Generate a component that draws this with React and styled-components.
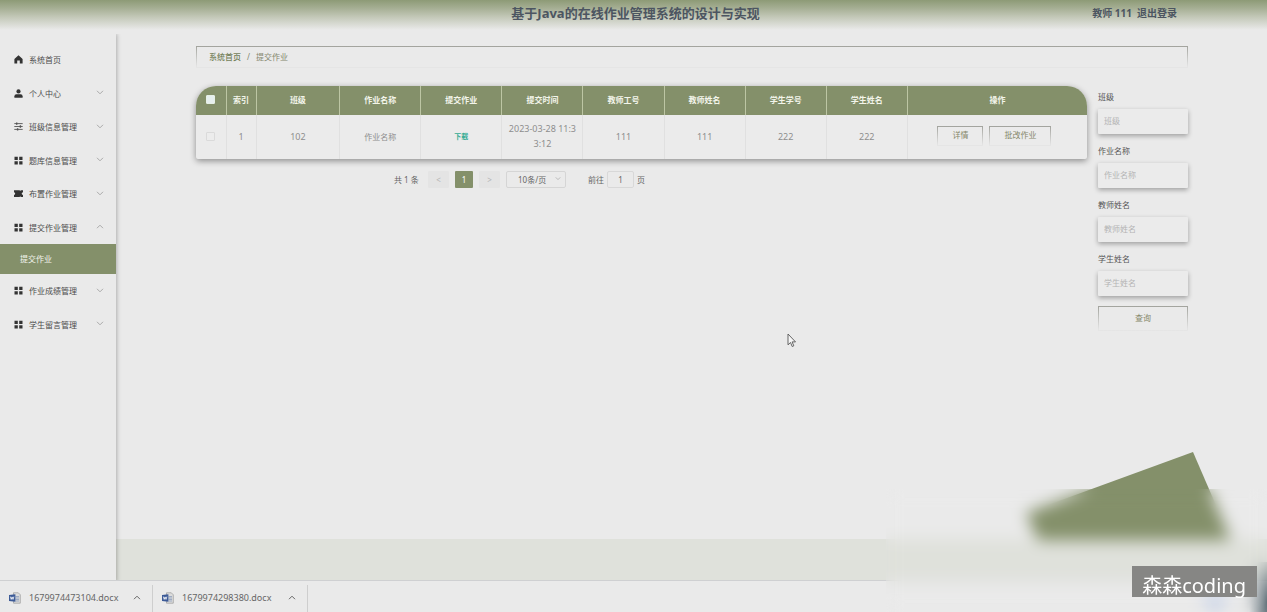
import React from "react";
import styled, { createGlobalStyle } from "styled-components";

const GREEN = "#84906a";
const PAPER = "#eaeaea";

const Global = createGlobalStyle`
  * { box-sizing: border-box; }
  body {
    margin: 0;
    background: ${PAPER};
    color: #555;
    font-family: "Noto Sans", "Noto Sans CJK SC", sans-serif;
    font-size: 8px;
  }
  button, input, select { font: inherit; color: inherit; margin: 0; }
  ul { list-style: none; margin: 0; padding: 0; }
  a { color: inherit; text-decoration: none; }
`;

const Page = styled.div`
  position: relative;
  display: flex;
  flex-direction: column;
  min-height: 100vh;
  overflow: hidden;
`;

const Header = styled.header`
  display: grid;
  grid-template-columns: 1fr auto 1fr;
  align-items: center;
  height: 32px;
  padding: 0 90px 6px;
  background: linear-gradient(#8d9a76 0, #a5ae93 8px, #c3c8b8 17px, ${PAPER} 30px);
  color: #4c5561;
`;

const Title = styled.h1`
  grid-column: 2;
  margin: 0;
  padding-left: 4px;
  font-size: 13px;
  line-height: 20px;
  font-weight: 700;
`;

const Account = styled.div`
  display: flex;
  justify-content: flex-end;
  gap: 5px;
  padding-bottom: 2px;
  font-size: 10px;
  font-weight: 700;
`;

const LinkButton = styled.button`
  border: 0;
  padding: 0;
  background: none;
  cursor: pointer;
`;

const Body = styled.div`
  display: flex;
  flex: 1;
`;

const Sidebar = styled.nav`
  flex: 0 0 116px;
  padding-top: 11px;
  box-shadow: 1px 2px 4px rgba(0, 0, 0, 0.26);
  clip-path: inset(2px -10px 0 0);
  z-index: 1;
`;

const Menu = styled.ul`
  display: grid;
  grid-auto-rows: 1fr;
  height: ${(p) => p.$height}px;
`;

const MenuLink = styled.a`
  display: flex;
  align-items: center;
  height: 100%;
  padding: 0 12px 0 14px;
  gap: 6px;
  color: #4c4c4c;

  span { flex: 1; }
`;

const SubLink = styled.a`
  display: flex;
  align-items: center;
  height: 30px;
  padding: 0 0 2px 20px;
  background: ${GREEN};
  color: #f2f4ec;
`;

const Main = styled.main`
  flex: 1;
  min-width: 0;
  display: flex;
  flex-direction: column;
`;

const Content = styled.div`
  flex: 1;
  padding: 14px 79px 0 80px;
`;

const fadingBorder = `
  border: 1px solid;
  border-image: linear-gradient(#a2a39d, #e2e2e2 90%, #e6e6e6) 1;
`;

const Breadcrumb = styled.nav`
  display: flex;
  align-items: center;
  gap: 6px;
  height: 22px;
  padding: 0 12px 2px;
  color: #84876f;
  ${fadingBorder}
  a { color: #74815a; font-weight: 500; }
`;

const Columns = styled.div`
  display: flex;
  align-items: flex-start;
  gap: 11px;
  margin-top: 18px;
`;

const Listing = styled.section`
  flex: 1;
  min-width: 0;
`;

const TableCard = styled.div`
  overflow: hidden;
  border-radius: 20px 20px 2px 2px;
  box-shadow: 0 2px 6px rgba(0, 0, 0, 0.4);
  background: #ebebeb;
`;

const Table = styled.table`
  width: 100%;
  table-layout: fixed;
  border-collapse: collapse;
  text-align: center;

  th, td { padding: 0 6px 2px; }
  th {
    height: 29px;
    background: ${GREEN};
    color: #f3f5ea;
    font-weight: 700;
  }
  th + th { border-left: 1px solid #bdc6a4; }
  td {
    height: 44px;
    color: #8e8e8e;
    font-size: 9px;
    line-height: 15px;
    word-break: break-all;
  }
  td + td { border-left: 1px solid #e0e0e0; }
`;

const Col = styled.col`
  width: ${(p) => p.$width};
`;

const CheckBox = styled.input`
  appearance: none;
  display: block;
  width: 9px;
  height: 9px;
  margin: 0 auto;
  border: 1px solid ${(p) => (p.$solid ? "#e6efe6" : "#dadada")};
  border-radius: 1px;
  background: ${(p) => (p.$solid ? "#e6efee" : "#ececec")};
`;

const Small = styled.span`
  font-size: 8px;
`;

const Download = styled.a`
  font-size: 7px;
  font-weight: 700;
  color: #35ab94;
`;

const Actions = styled.div`
  display: flex;
  justify-content: center;
  gap: 6px;
  padding-right: 6px;
`;

const OutlineButton = styled.button`
  height: ${(p) => p.$height || 20}px;
  padding: 0 14px 2px;
  width: ${(p) => p.$width || "auto"};
  background: none;
  color: #85876a;
  font-size: 8px;
  line-height: 14px;
  ${fadingBorder}
`;

const Pagination = styled.div`
  display: flex;
  align-items: center;
  height: 18px;
  margin: 11px 0 0 198px;
  color: #666;
`;

const PageButton = styled.button`
  width: ${(p) => (p.$current ? 18 : 21)}px;
  height: 17px;
  margin-right: 6px;
  padding: 0;
  border: 0;
  border-radius: 1px;
  background: ${(p) => (p.$current ? GREEN : "#e4e4e4")};
  color: ${(p) => (p.$current ? "#fff" : "#b5b5b5")};
`;

const Total = styled.span`
  width: 34px;
`;

const SizeWrap = styled.span`
  display: flex;
  align-items: center;
  width: 60px;
  height: 17px;
  margin-right: 22px;
  padding-right: 4px;
  border: 1px solid #d5d5d5;
  border-radius: 2px;
`;

const SizeSelect = styled.select`
  appearance: none;
  flex: 1;
  min-width: 0;
  padding: 0 0 0 11px;
  border: 0;
  background: none;
  color: #666;
`;

const JumpLabel = styled.label`
  display: flex;
  align-items: center;
  gap: 3px;
`;

const JumpInput = styled.input`
  width: 27px;
  height: 17px;
  padding: 0;
  border: 1px solid #d8d8d8;
  border-radius: 2px;
  background: none;
  text-align: center;
`;

const Search = styled.form`
  flex: 0 0 90px;
`;

const Field = styled.label`
  display: flex;
  flex-direction: column;
  height: 54px;
  color: #555;
  line-height: 21px;
  gap: 2px;
`;

const FieldInput = styled.input`
  width: 100%;
  height: 25px;
  padding: 0 6px 2px;
  border: 0;
  border-radius: 1px;
  background: #ebebeb;
  box-shadow: 0 2px 5px rgba(0, 0, 0, 0.32);
  &::placeholder { color: #b4b4b4; opacity: 1; }
`;

const SearchFoot = styled.div`
  padding-top: 4px;
`;

const Band = styled.footer`
  height: 41px;
  background: #dfe1db;
`;

const Shelf = styled.aside`
  display: flex;
  align-items: flex-end;
  height: 32px;
  border-top: 1px solid #cfd0d2;
`;

const DownloadItem = styled.div`
  display: flex;
  align-items: center;
  width: ${(p) => p.$width}px;
  height: 27px;
  padding: 0 11px 2px 9px;
  border-right: 1px solid #cecece;
  font-size: 9px;
  color: #666;

  a { flex: 1; padding-left: 8px; }
`;

const IconButton = styled.button`
  display: flex;
  padding: 0;
  border: 0;
  background: none;
`;

const Ornament = styled.svg`
  position: absolute;
  right: 0;
  bottom: 0;
  width: 267px;
  height: 172px;
`;

const Frost = styled.div`
  position: absolute;
  right: 0;
  bottom: 0;
  width: 381px;
  height: 123px;
  z-index: 2;
  backdrop-filter: blur(8px);
`;

const Watermark = styled.div`
  position: absolute;
  right: 10px;
  bottom: 15px;
  z-index: 3;
  height: 31px;
  padding: 5px 11px 0 10px;
  background: #868684;
  color: #fff;
  font-size: 20px;
  line-height: 30px;
`;

const Pointer = styled.svg`
  position: absolute;
  left: 787px;
  top: 333px;
`;

function Chevron({ up, size = 8, color = "#aaa" }) {
  return (
    <svg width={size} height={size} viewBox="0 0 8 8" fill="none" stroke={color} aria-hidden="true">
      <path d={up ? "M1 5.2 4 2.2 7 5.2" : "M1 1.8 4 4.8 7 1.8"} />
    </svg>
  );
}

const shapes = {
  home: <path d="M4.5 0.3 8.6 4v4.6H5.8V5.6H3.2v3H.4V4z" fill="#333" />,
  user: (
    <g fill="#333">
      <circle cx="4.5" cy="2.4" r="2.1" />
      <path d="M.4 8.7V7.2Q.4 5.3 2.4 5.3h4.2q2 0 2 1.9v1.5z" />
    </g>
  ),
  sliders: (
    <g stroke="#555" strokeWidth="0.9" fill="none">
      <path d="M.3 1.6h8.4M.3 4.5h8.4M.3 7.4h8.4" />
      <path d="M2.7.4v2.4M6.4 3.3v2.4M3.6 6.2v2.4" strokeWidth="1.4" />
    </g>
  ),
  grid: (
    <path d="M.5.7h3.3v3.2H.5zM5.2.7h3.3v3.2H5.2zM.5 5.2h3.3v3.2H.5zM5.2 5.2h3.3v3.2H5.2z" fill="#333" />
  ),
  ticket: (
    <path d="M0 1.2h5.6l.6.7.6-.7H9v2Q7.7 3.4 7.7 4.6T9 6v2H6.8l-.6-.7-.6.7H0V6q1.2-.3 1.2-1.4T0 3.2z" fill="#333" />
  ),
};

function MenuItem({ icon, children, arrow }) {
  return (
    <li>
      <MenuLink href="#">
        <svg width="9" height="9" viewBox="0 0 9 9" aria-hidden="true">{shapes[icon]}</svg>
        <span>{children}</span>
        {arrow && <Chevron up={arrow === "up"} />}
      </MenuLink>
    </li>
  );
}

function WordIcon() {
  return (
    <svg width="12" height="12" viewBox="0 0 12 12" aria-hidden="true">
      <path d="M4.5.8h4.8l2 2v8.4H4.5z" fill="#dcdcdc" stroke="#999" strokeWidth="0.7" />
      <path d="M6.5 4.5H10M6.5 6H10M6.5 7.5H10M6.5 9H10" stroke="#8295b8" strokeWidth="0.7" />
      <path d="M0 3 6.4 2.2v7.6L0 9z" fill="#3c5a97" />
      <path d="m1.4 4.6.8 2.8.9-2.5.9 2.5.9-2.8" fill="none" stroke="#fff" strokeWidth="0.8" />
    </svg>
  );
}

const columns = [
  ["班级", "9.4%"], ["作业名称", "9.1%"], ["提交作业", "9.1%"], ["提交时间", "9.1%"],
  ["教师工号", "9.1%"], ["教师姓名", "9.1%"], ["学生学号", "9.1%"], ["学生姓名", "9.1%"],
  ["操作", "auto"],
];
const filters = ["班级", "作业名称", "教师姓名", "学生姓名"];
const files = [["1679974473104.docx", 153], ["1679974298380.docx", 155]];

export default function App() {
  return (
    <Page>
      <Global />
      <Header>
        <Title>基于Java的在线作业管理系统的设计与实现</Title>
        <Account>
          <span>教师 111</span>
          <LinkButton type="button">退出登录</LinkButton>
        </Account>
      </Header>
      <Body>
        <Sidebar>
          <Menu $height={201}>
            <MenuItem icon="home">系统首页</MenuItem>
            <MenuItem icon="user" arrow="down">个人中心</MenuItem>
            <MenuItem icon="sliders" arrow="down">班级信息管理</MenuItem>
            <MenuItem icon="grid" arrow="down">题库信息管理</MenuItem>
            <MenuItem icon="ticket" arrow="down">布置作业管理</MenuItem>
            <MenuItem icon="grid" arrow="up">提交作业管理</MenuItem>
          </Menu>
          <SubLink href="#">提交作业</SubLink>
          <Menu $height={67}>
            <MenuItem icon="grid" arrow="down">作业成绩管理</MenuItem>
            <MenuItem icon="grid" arrow="down">学生留言管理</MenuItem>
          </Menu>
        </Sidebar>
        <Main>
          <Content>
            <Breadcrumb>
              <a href="#">系统首页</a>
              <span>/</span>
              <span>提交作业</span>
            </Breadcrumb>
            <Columns>
              <Listing>
                <TableCard>
                  <Table>
                    <colgroup>
                      <Col $width="30px" />
                      <Col $width="30px" />
                      {columns.map(([name, width]) => <Col key={name} $width={width} />)}
                    </colgroup>
                    <thead>
                      <tr>
                        <th><CheckBox type="checkbox" $solid aria-label="全选" /></th>
                        <th>索引</th>
                        {columns.map(([name]) => <th key={name}>{name}</th>)}
                      </tr>
                    </thead>
                    <tbody>
                      <tr>
                        <td><CheckBox type="checkbox" aria-label="选择" /></td>
                        <td>1</td>
                        <td>102</td>
                        <td><Small>作业名称</Small></td>
                        <td><Download href="#">下载</Download></td>
                        <td>2023-03-28 11:33:12</td>
                        <td>111</td>
                        <td>111</td>
                        <td>222</td>
                        <td>222</td>
                        <td>
                          <Actions>
                            <OutlineButton type="button">详情</OutlineButton>
                            <OutlineButton type="button">批改作业</OutlineButton>
                          </Actions>
                        </td>
                      </tr>
                    </tbody>
                  </Table>
                </TableCard>
                <Pagination>
                  <Total>共 1 条</Total>
                  <PageButton type="button">&lt;</PageButton>
                  <PageButton type="button" $current>1</PageButton>
                  <PageButton type="button">&gt;</PageButton>
                  <SizeWrap>
                    <SizeSelect aria-label="每页条数"><option>10条/页</option></SizeSelect>
                    <Chevron size={6} />
                  </SizeWrap>
                  <JumpLabel>
                    前往
                    <JumpInput defaultValue="1" />
                    页
                  </JumpLabel>
                </Pagination>
              </Listing>
              <Search>
                {filters.map((name) => (
                  <Field key={name}>
                    {name}
                    <FieldInput placeholder={name} />
                  </Field>
                ))}
                <SearchFoot>
                  <OutlineButton type="button" $width="100%" $height={25}>查询</OutlineButton>
                </SearchFoot>
              </Search>
            </Columns>
          </Content>
          <Band />
        </Main>
      </Body>
      <Shelf>
        {files.map(([name, width]) => (
          <DownloadItem key={name} $width={width}>
            <WordIcon />
            <a href="#">{name}</a>
            <IconButton type="button" aria-label="更多">
              <Chevron up color="#666" />
            </IconButton>
          </DownloadItem>
        ))}
      </Shelf>
      <Ornament viewBox="0 0 267 172" aria-hidden="true">
        <defs>
          <radialGradient id="dusk" cx="1" cy="0.8" r="1">
            <stop offset="0" stopColor="#4a5c66" />
            <stop offset="1" stopColor="#4a5c66" stopOpacity="0" />
          </radialGradient>
          <radialGradient id="glow">
            <stop offset="0" stopColor="#c8d3e8" />
            <stop offset="1" stopColor="#c8d3e8" stopOpacity="0" />
          </radialGradient>
        </defs>
        <path d="M193 12 26 73 38 100H231z" fill={GREEN} />
        <circle cx="215" cy="158" r="18" fill="url(#glow)" />
        <path d="M249 122h18v50h-18z" fill="url(#dusk)" />
      </Ornament>
      <Frost />
      <Watermark>森森coding</Watermark>
      <Pointer width="10" height="15" viewBox="0 0 10 15" aria-hidden="true">
        <path d="M1 1v10.8l2.5-2.3 1.7 4 1.6-.7-1.7-3.9h3.4z" fill="#f6f6f6" stroke="#555" strokeWidth="0.9" />
      </Pointer>
    </Page>
  );
}
